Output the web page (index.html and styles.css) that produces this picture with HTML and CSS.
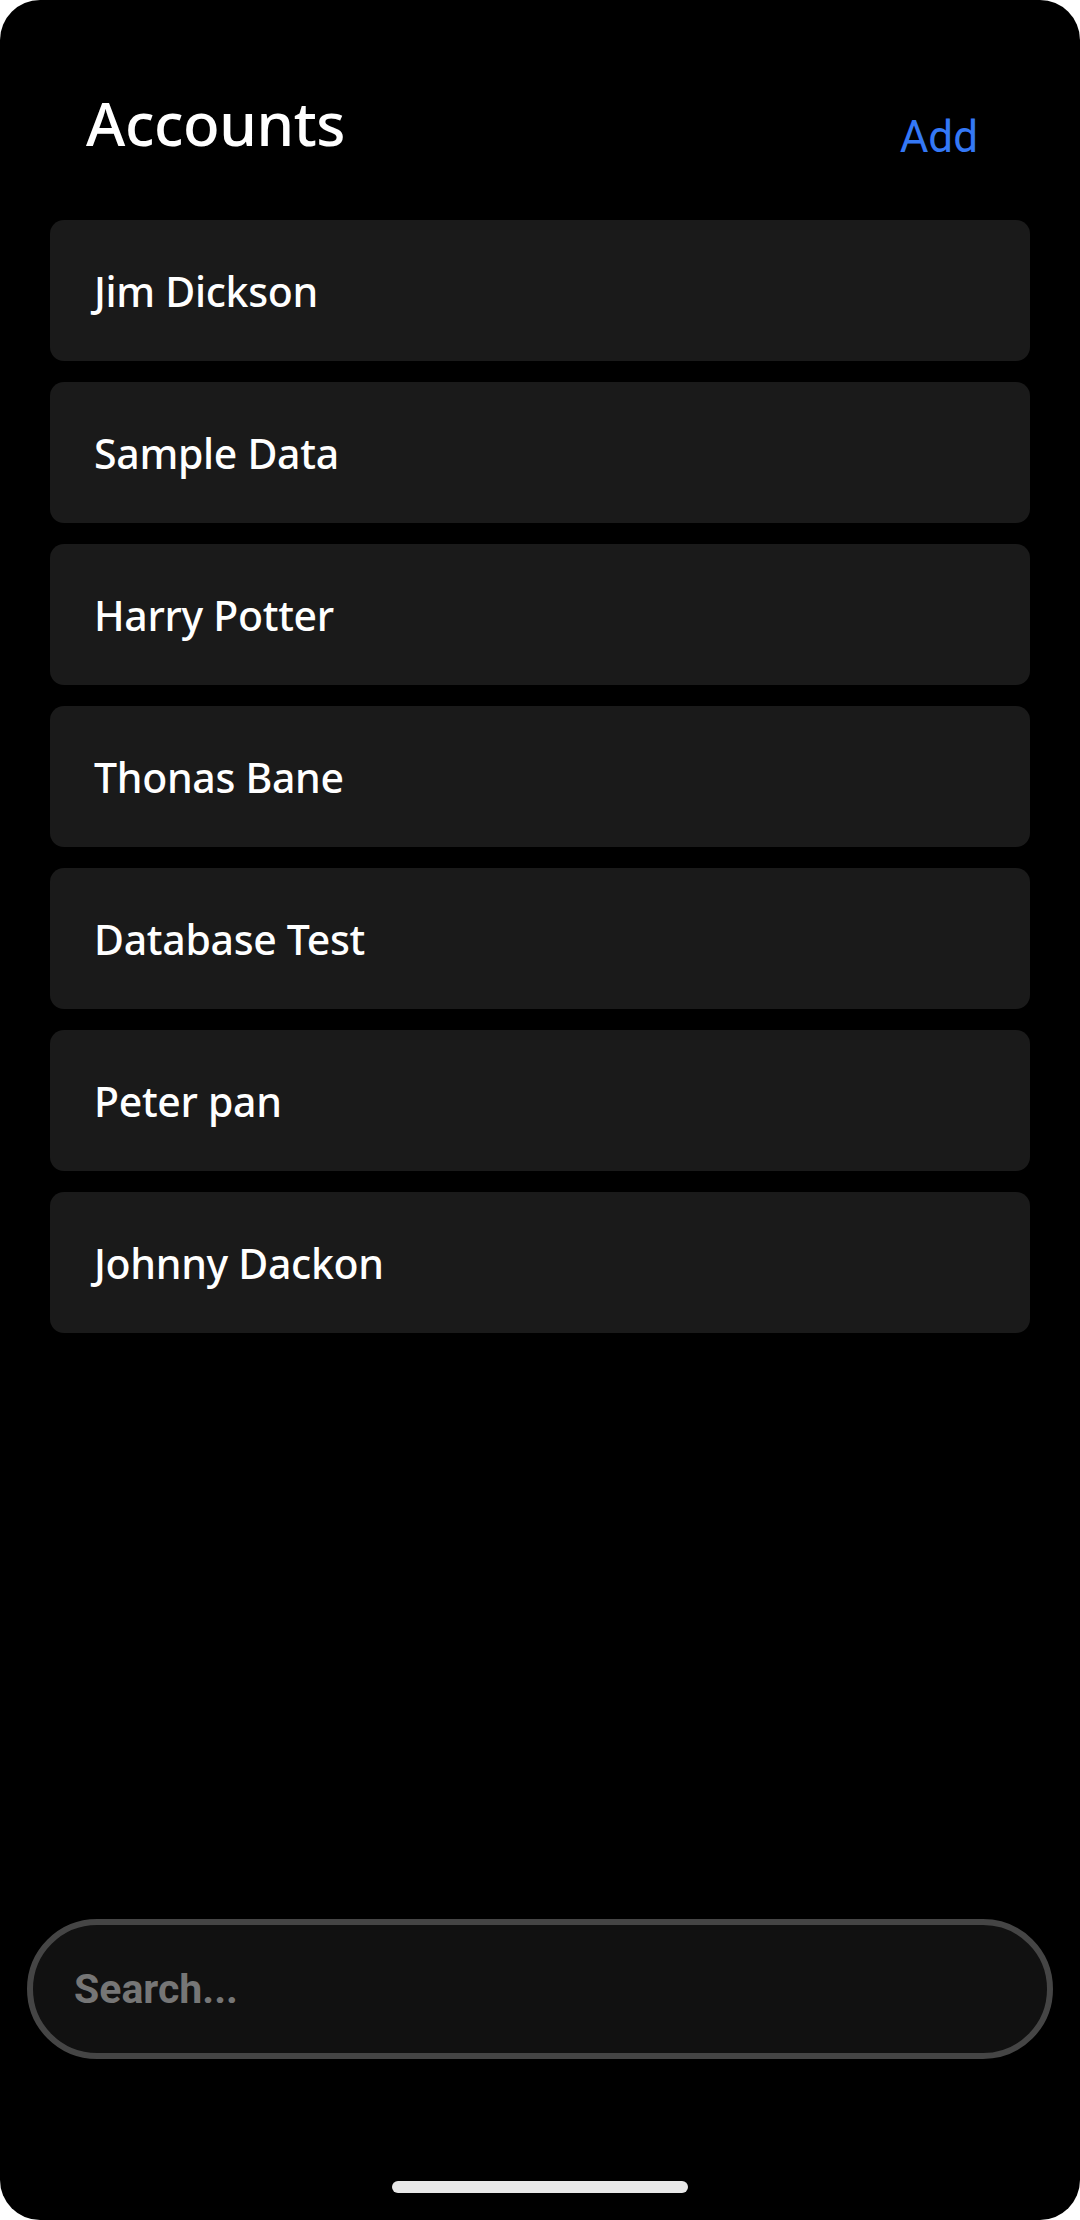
FILE: index.html
```html
<!DOCTYPE html>
<html lang="en">
<head>
<meta charset="utf-8">
<title>Accounts</title>
<link rel="stylesheet" href="styles.css">
</head>
<body>
<div class="screen">
  <header class="header">
    <h1 class="title">Accounts</h1>
    <button class="add-btn" type="button">Add</button>
  </header>
  <ul class="account-list">
    <li class="account-card">Jim Dickson</li>
    <li class="account-card">Sample Data</li>
    <li class="account-card">Harry Potter</li>
    <li class="account-card">Thonas Bane</li>
    <li class="account-card">Database Test</li>
    <li class="account-card">Peter pan</li>
    <li class="account-card">Johnny Dackon</li>
  </ul>
  <div class="spacer"></div>
  <div class="search-wrap">
    <input class="search-input" type="text" placeholder="Search...">
  </div>
  <div class="home-indicator"></div>
</div>
</body>
</html>
```
FILE: styles.css
```css
* {
  box-sizing: border-box;
}

html, body {
  margin: 0;
  padding: 0;
  background: #ffffff;
}

body {
  width: 1080px;
  height: 2220px;
  overflow: hidden;
}

.screen {
  width: 1080px;
  height: 2220px;
  background: #000000;
  border-radius: 40px;
  display: flex;
  flex-direction: column;
  overflow: hidden;
}

.header {
  display: flex;
  justify-content: space-between;
  align-items: flex-start;
  height: 159px;
  padding: 87px 102px 0 86px;
}

.title {
  margin: 0;
  font-family: "Noto Sans", "Open Sans", sans-serif;
  font-weight: 500;
  font-size: 60px;
  line-height: 72px;
  color: #ffffff;
  letter-spacing: -0.4px;
}

.add-btn {
  margin: 14px 0 0 0;
  padding: 0;
  border: none;
  background: transparent;
  font-family: Roboto, "Noto Sans", sans-serif;
  font-weight: 400;
  font-size: 44px;
  line-height: 72px;
  color: #3478f6;
}

.account-list {
  list-style: none;
  margin: 61px 50px 0 50px;
  padding: 0;
  display: flex;
  flex-direction: column;
  gap: 21px;
}

.account-card {
  height: 141px;
  background: #1a1a1a;
  border-radius: 14px;
  display: flex;
  align-items: center;
  padding-left: 44px;
  font-family: "Noto Sans", "Open Sans", sans-serif;
  font-weight: 500;
  font-size: 41px;
  letter-spacing: -0.3px;
  color: #ffffff;
}

.spacer {
  flex: 1;
}

.search-wrap {
  margin: 0 27px;
}

.search-input {
  display: block;
  width: 100%;
  height: 140px;
  border: 6px solid #454545;
  border-radius: 70px;
  background: #111111;
  padding: 0 0 0 41px;
  font-family: Roboto, "Noto Sans", sans-serif;
  font-weight: 700;
  font-size: 41px;
  color: #ffffff;
  outline: none;
}

.search-input::placeholder {
  color: #767676;
  opacity: 1;
}

.home-indicator {
  align-self: center;
  width: 296px;
  height: 12px;
  border-radius: 6px;
  background: #e8e8e8;
  margin: 122px 0 27px 0;
}
```
